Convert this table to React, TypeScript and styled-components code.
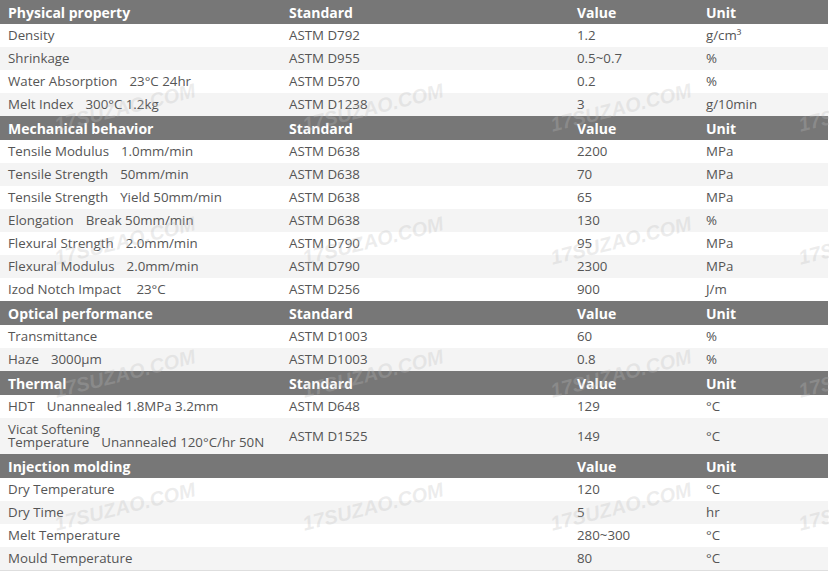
import * as React from "react";
import styled, { createGlobalStyle } from "styled-components";

type Row = { name: string; cond?: string; std?: string; value: string; unit: string; tall?: boolean };
type Section = { title: string; hasStd: boolean; rows: Row[] };

const sections: Section[] = [
  {
    title: "Physical property",
    hasStd: true,
    rows: [
      { name: "Density", std: "ASTM D792", value: "1.2", unit: "g/cm³" },
      { name: "Shrinkage", std: "ASTM D955", value: "0.5~0.7", unit: "%" },
      { name: "Water Absorption", cond: "23°C 24hr", std: "ASTM D570", value: "0.2", unit: "%" },
      { name: "Melt Index", cond: "300°C 1.2kg", std: "ASTM D1238", value: "3", unit: "g/10min" },
    ],
  },
  {
    title: "Mechanical behavior",
    hasStd: true,
    rows: [
      { name: "Tensile Modulus", cond: "1.0mm/min", std: "ASTM D638", value: "2200", unit: "MPa" },
      { name: "Tensile Strength", cond: "50mm/min", std: "ASTM D638", value: "70", unit: "MPa" },
      { name: "Tensile Strength", cond: "Yield 50mm/min", std: "ASTM D638", value: "65", unit: "MPa" },
      { name: "Elongation", cond: "Break 50mm/min", std: "ASTM D638", value: "130", unit: "%" },
      { name: "Flexural Strength", cond: "2.0mm/min", std: "ASTM D790", value: "95", unit: "MPa" },
      { name: "Flexural Modulus", cond: "2.0mm/min", std: "ASTM D790", value: "2300", unit: "MPa" },
      { name: "Izod Notch Impact", cond: " 23°C", std: "ASTM D256", value: "900", unit: "J/m" },
    ],
  },
  {
    title: "Optical performance",
    hasStd: true,
    rows: [
      { name: "Transmittance", std: "ASTM D1003", value: "60", unit: "%" },
      { name: "Haze", cond: "3000μm", std: "ASTM D1003", value: "0.8", unit: "%" },
    ],
  },
  {
    title: "Thermal",
    hasStd: true,
    rows: [
      { name: "HDT", cond: "Unannealed 1.8MPa 3.2mm", std: "ASTM D648", value: "129", unit: "°C" },
      {
        name: "Vicat Softening\nTemperature",
        cond: "Unannealed 120°C/hr 50N",
        std: "ASTM D1525",
        value: "149",
        unit: "°C",
        tall: true,
      },
    ],
  },
  {
    title: "Injection molding",
    hasStd: false,
    rows: [
      { name: "Dry Temperature", value: "120", unit: "°C" },
      { name: "Dry Time", value: "5", unit: "hr" },
      { name: "Melt Temperature", value: "280~300", unit: "°C" },
      { name: "Mould Temperature", value: "80", unit: "°C" },
    ],
  },
];

const GlobalStyle = createGlobalStyle`
  body {
    margin: 0;
    background: #fff;
    font-family: "Open Sans", "Noto Sans", sans-serif;
  }
`;

const Page = styled.div`
  position: relative;
  width: 829px;
  height: 572px;
  overflow: hidden;
  background: #fff;
`;

const Table = styled.div`
  width: 828px;
  border-bottom: 1px solid #dedede;
`;

const Grid = styled.div<{ $head?: boolean; $alt?: boolean; $tall?: boolean }>`
  display: grid;
  grid-template-columns: 281px 288px 129px 1fr;
  align-items: center;
  height: ${(p) => (p.$head ? 24 : p.$tall ? 36 : 23)}px;
  background: ${(p) => (p.$head ? "#777" : p.$alt ? "#f4f4f4" : "#fff")};
  color: ${(p) => (p.$head ? "#fff" : "#555")};
  font-size: ${(p) => (p.$head ? 14 : 13.3)}px;
  font-weight: ${(p) => (p.$head ? 700 : 400)};
`;

const Cell = styled.div`
  padding-left: 8px;
  white-space: pre-line;
  line-height: 13px;
`;

const Cond = styled.span`
  margin-left: 12px;
`;

const Marks = styled.div`
  position: absolute;
  inset: 0;
  pointer-events: none;
`;

const Mark = styled.span`
  position: absolute;
  transform: translate(-50%, -50%) rotate(-14deg);
  font-family: "Liberation Sans", Arial, sans-serif;
  font-weight: 700;
  font-style: italic;
  font-size: 20px;
  color: rgba(190, 190, 190, 0.28);
  white-space: nowrap;
`;

const markPositions: [number, number][] = [];
for (let r = 1; r < 5; r++) {
  for (let c = 0; c < 4; c++) {
    markPositions.push([125 + c * 248, -25 + r * 133]);
  }
}

export default function App() {
  return (
    <Page>
      <GlobalStyle />
      <Table>
        {sections.map((sec) => (
          <React.Fragment key={sec.title}>
            <Grid $head>
              <Cell>{sec.title}</Cell>
              <Cell>{sec.hasStd ? "Standard" : ""}</Cell>
              <Cell>Value</Cell>
              <Cell>Unit</Cell>
            </Grid>
            {sec.rows.map((row, i) => (
              <Grid key={i} $alt={i % 2 === 1} $tall={row.tall}>
                <Cell>
                  {row.name}
                  {row.cond && <Cond>{row.cond}</Cond>}
                </Cell>
                <Cell>{row.std ?? ""}</Cell>
                <Cell>{row.value}</Cell>
                <Cell>{row.unit}</Cell>
              </Grid>
            ))}
          </React.Fragment>
        ))}
      </Table>
      <Marks>
        {markPositions.map(([x, y], i) => (
          <Mark key={i} style={{ left: x, top: y }}>
            17SUZAO.COM
          </Mark>
        ))}
      </Marks>
    </Page>
  );
}
